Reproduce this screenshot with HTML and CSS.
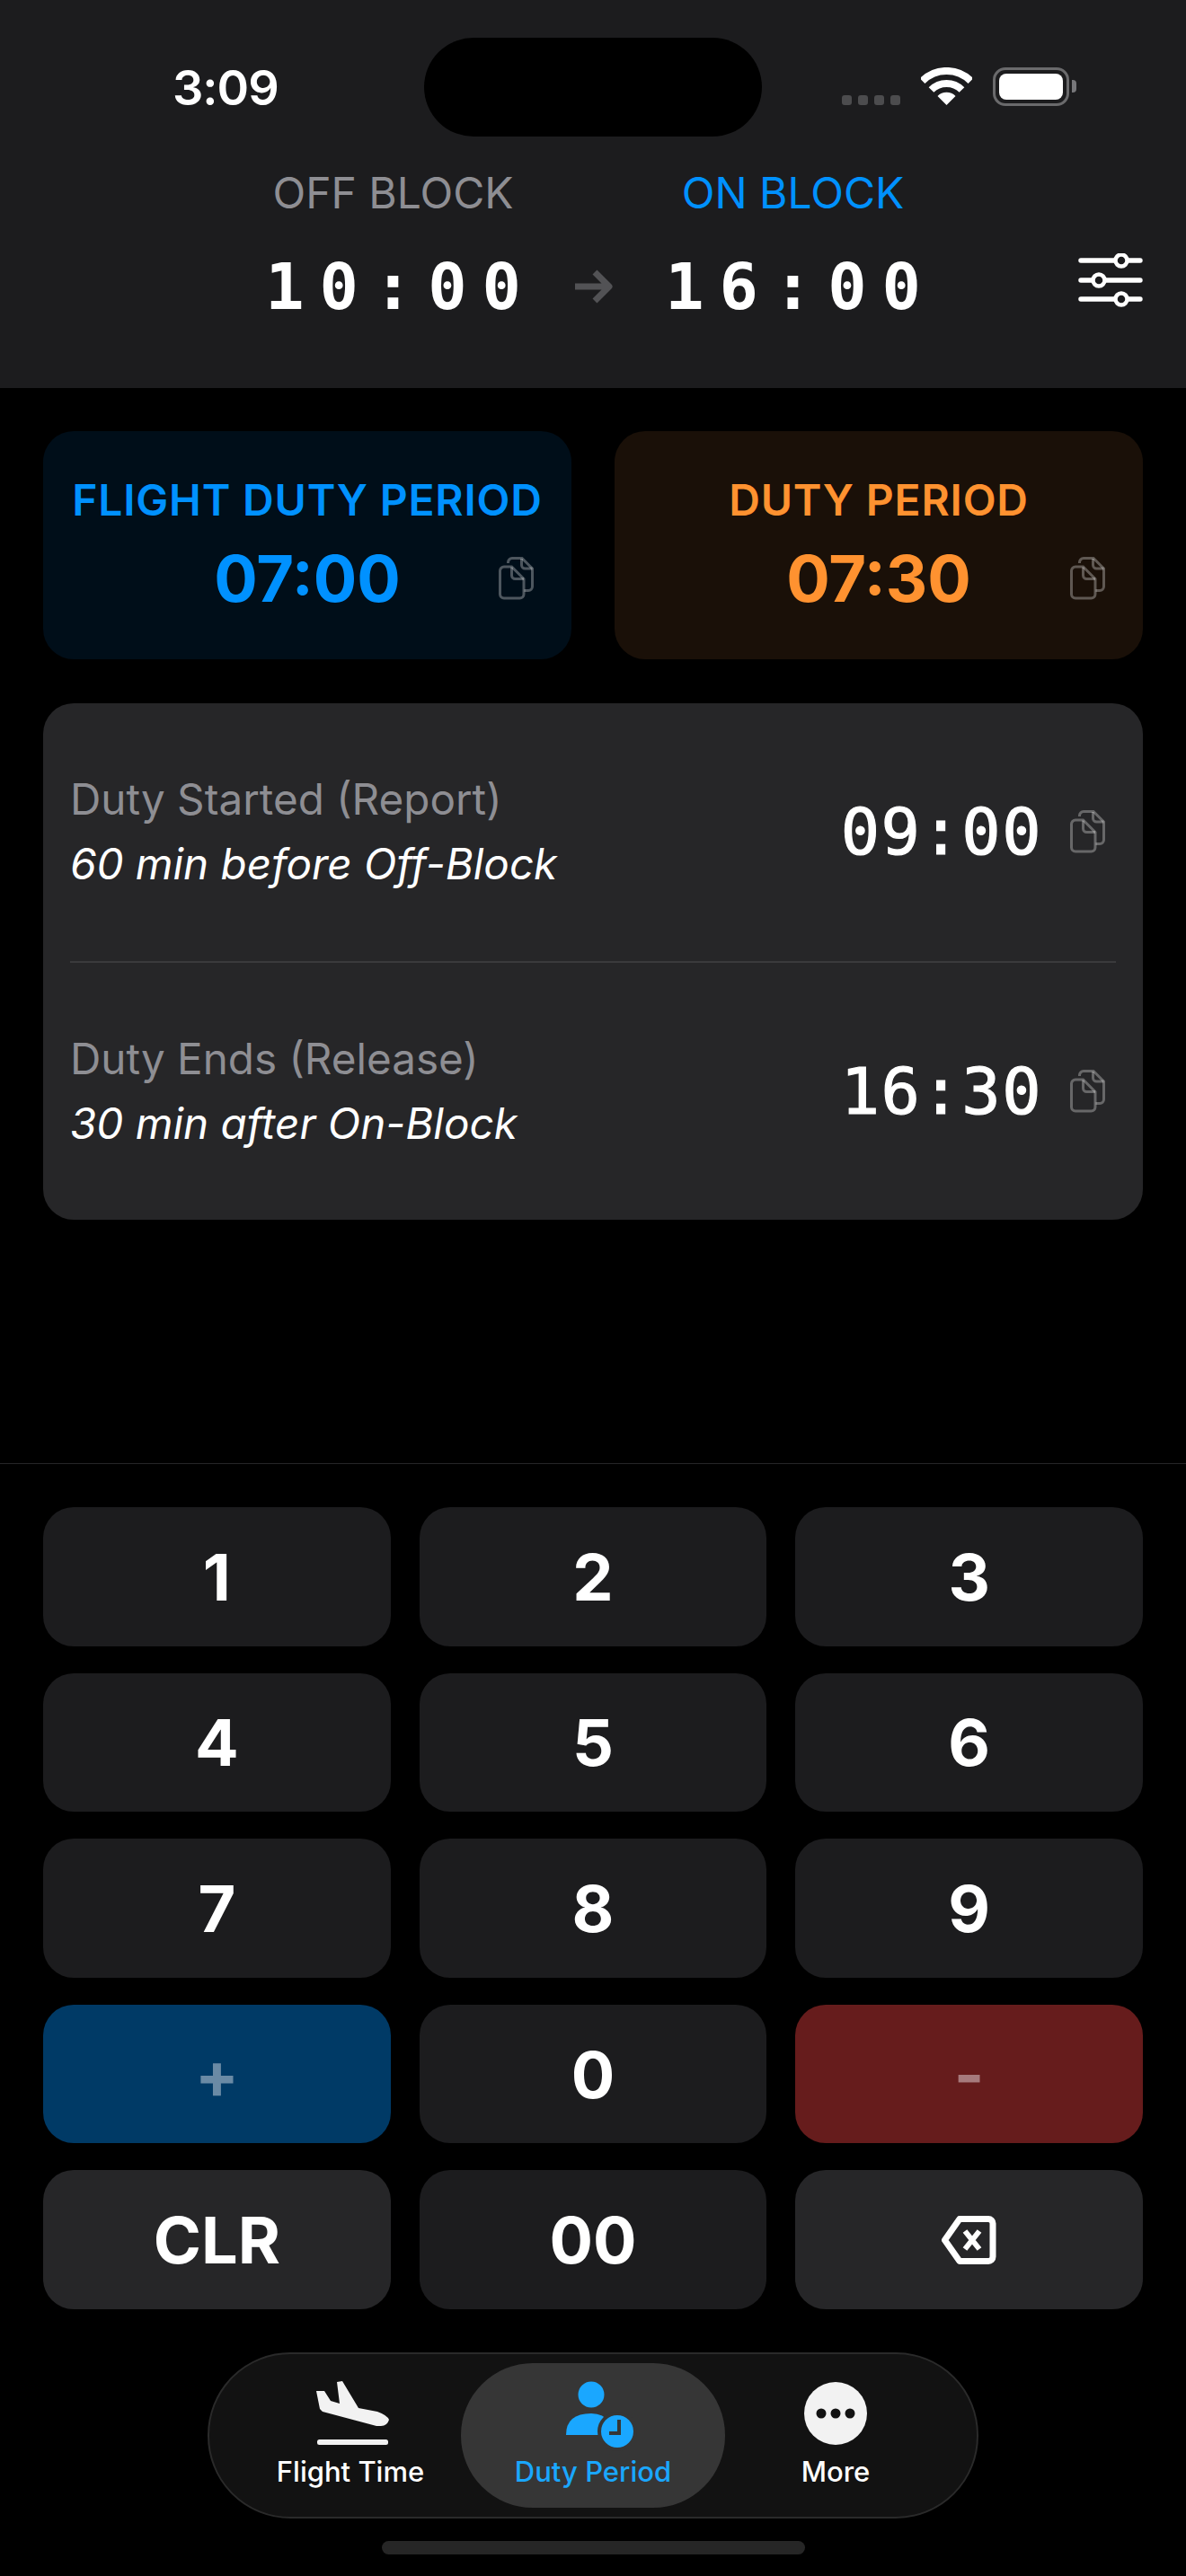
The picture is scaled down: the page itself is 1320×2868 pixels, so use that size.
FILE: index.html
```html
<!DOCTYPE html>
<html lang="en">
<head>
<meta charset="UTF-8" />
<meta name="viewport" content="width=device-width, initial-scale=1" />
<title>Duty Period</title>
<link rel="stylesheet" href="styles.css">
</head>
<body>

<svg class="defs" aria-hidden="true">
  <symbol id="copy" viewBox="0 0 39 48">
    <path d="M10.500 7V6a4.500 4.500 0 0 1 4.500-4.500h11L37.500 13v20a4.500 4.500 0 0 1-4.500 4.500h-4.500" fill="none" stroke="currentColor" stroke-width="3"/>
    <path d="M25.500 2v7a4 4 0 0 0 4 4h8" fill="none" stroke="currentColor" stroke-width="3"/>
    <path d="M6 11h8.500L28 24.500V41.500a4.500 4.500 0 0 1-4.500 4.500H6a4.500 4.500 0 0 1-4.500-4.500v-26A4.500 4.500 0 0 1 6 11z" fill="none" stroke="currentColor" stroke-width="3"/>
    <path d="M14.500 11.500v9a4 4 0 0 0 4 4H28" fill="none" stroke="currentColor" stroke-width="3"/>
  </symbol>
</svg>

<div class="page">
  <header class="top">
    <div class="status">
      <div class="clock">3:09</div>
      <div class="island"></div>
      <div class="status-icons">
        <div class="signal"><i></i><i></i><i></i><i></i></div>
        <svg class="wifi" viewBox="0 0 57 42">
          <path d="M1.600 15.100a38 38 0 0 1 53.800 0" fill="none" stroke="#fff" stroke-width="8"/>
          <path d="M11.500 25a24 24 0 0 1 34 0" fill="none" stroke="#fff" stroke-width="8"/>
          <path d="M28.500 42L18.500 32a14 14 0 0 1 20 0z" fill="#fff"/>
        </svg>
        <div class="battery"><div class="battery-fill"></div></div>
        <div class="battery-cap"></div>
      </div>
    </div>

    <div class="block-row">
      <div></div>
      <div class="block-grid">
        <div class="block-label">OFF BLOCK</div>
        <div></div>
        <div class="block-label on">ON BLOCK</div>
        <div class="block-time">10:00</div>
        <svg class="arrow" viewBox="0 0 46 38">
          <path d="M3 19h38M25 3l16 16-16 16" fill="none" stroke="#525255" stroke-width="7" stroke-linejoin="round"/>
        </svg>
        <div class="block-time">16:00</div>
      </div>
      <svg class="sliders" viewBox="0 0 72 60">
        <path d="M3 8h66M3 30h66M3 51h66" stroke="#fff" stroke-width="5.500" stroke-linecap="round"/>
        <circle cx="48" cy="8" r="6.500" fill="#1c1c1e" stroke="#fff" stroke-width="4.500"/>
        <circle cx="23" cy="30" r="6.500" fill="#1c1c1e" stroke="#fff" stroke-width="4.500"/>
        <circle cx="48" cy="51" r="6.500" fill="#1c1c1e" stroke="#fff" stroke-width="4.500"/>
      </svg>
    </div>
  </header>

  <main class="main">
    <div class="cards">
      <div class="card fdp">
        <div class="card-title">FLIGHT DUTY PERIOD</div>
        <div class="card-value">07:00</div>
        <svg class="copy card-copy"><use href="#copy"/></svg>
      </div>
      <div class="card dp">
        <div class="card-title">DUTY PERIOD</div>
        <div class="card-value">07:30</div>
        <svg class="copy card-copy"><use href="#copy"/></svg>
      </div>
    </div>

    <div class="panel">
      <div class="panel-row">
        <div class="panel-text">
          <div class="panel-label">Duty Started (Report)</div>
          <div class="panel-note">60 min before Off-Block</div>
        </div>
        <div class="panel-time">09:00</div>
        <svg class="copy"><use href="#copy"/></svg>
      </div>
      <div class="panel-row">
        <div class="panel-text">
          <div class="panel-label">Duty Ends (Release)</div>
          <div class="panel-note">30 min after On-Block</div>
        </div>
        <div class="panel-time">16:30</div>
        <svg class="copy"><use href="#copy"/></svg>
      </div>
    </div>
  </main>

  <section class="keypad">
    <div class="keys">
      <div class="key">1</div>
      <div class="key">2</div>
      <div class="key">3</div>
      <div class="key">4</div>
      <div class="key">5</div>
      <div class="key">6</div>
      <div class="key">7</div>
      <div class="key">8</div>
      <div class="key">9</div>
      <div class="key plus">+</div>
      <div class="key">0</div>
      <div class="key minus">-</div>
      <div class="key light">CLR</div>
      <div class="key">00</div>
      <div class="key light">
        <svg class="backspace" viewBox="0 0 61 54">
          <path d="M20 3.500H52a5 5 0 0 1 5 5V45.500a5 5 0 0 1-5 5H20L3.500 27z" fill="none" stroke="#fff" stroke-width="7" stroke-linejoin="round"/>
          <path d="M26 17l16 20M42 17L26 37" fill="none" stroke="#fff" stroke-width="6"/>
        </svg>
      </div>
    </div>

    <nav class="tabs">
      <div class="tab">
        <svg class="tab-icon" viewBox="-3 0 84 72">
          <path d="M1 11L10 11L17 22L27 25L24 1L30 0L48 30L69 34Q80 38 82 43Q80 50 73 50L68 50L8 34L5 31z" fill="#f2f2f2"/>
          <rect x="2" y="65" width="79" height="6" rx="2.500" fill="#f2f2f2"/>
        </svg>
        <div class="tab-label">Flight Time</div>
      </div>
      <div class="tab active">
        <svg class="tab-icon" viewBox="-10 0 84 72">
          <circle cx="30" cy="15" r="14.500" fill="#1aa7ff"/>
          <path d="M2 60Q2 36 30 36Q44 36 50 46V60z" fill="#1aa7ff"/>
          <circle cx="59" cy="56" r="22" fill="#363636"/>
          <circle cx="59" cy="56" r="18" fill="#1aa7ff"/>
          <path d="M61 43v15H50" fill="none" stroke="#363636" stroke-width="4"/>
        </svg>
        <div class="tab-label">Duty Period</div>
      </div>
      <div class="tab">
        <svg class="tab-icon" viewBox="0 0 84 72">
          <circle cx="42" cy="36" r="35" fill="#f2f2f2"/>
          <circle cx="26" cy="36" r="5.500" fill="#121212"/>
          <circle cx="42" cy="36" r="5.500" fill="#121212"/>
          <circle cx="58" cy="36" r="5.500" fill="#121212"/>
        </svg>
        <div class="tab-label">More</div>
      </div>
    </nav>

    <div class="home-bar"></div>
  </section>
</div>

</body>
</html>
```

FILE: styles.css
```css
/* Phone sized page, everything stacks top to bottom */
body {
  margin: 0;
  background: #000;
  color: #fff;
  font-family: Inter, 'Noto Sans', sans-serif;
}

.defs {
  display: none;
}

.page {
  width: 1320px;
  height: 2868px;
  display: flex;
  flex-direction: column;
  overflow: hidden;
}

/* Header */
.top {
  height: 432px;
  box-sizing: border-box;
  background: #1c1c1e;
  padding-top: 42px;
}

.status {
  display: grid;
  grid-template-columns: 472px 376px 472px;
  align-items: center;
}

.clock {
  padding-left: 192px;
  font-size: 54px;
  font-weight: 600;
  letter-spacing: -1px;
}

.island {
  height: 110px;
  background: #000;
  border-radius: 55px;
}

.status-icons {
  display: flex;
  align-items: center;
  padding-left: 89px;
}

.signal {
  display: flex;
  gap: 7px;
  align-self: flex-end;
  margin-bottom: 1px;
}

.signal i {
  width: 11px;
  height: 11px;
  border-radius: 3px;
  background: #4c4c4e;
}

.wifi {
  width: 57px;
  height: 42px;
  margin-left: 23px;
  margin-top: -2px;
}

.battery {
  width: 85px;
  height: 43px;
  box-sizing: border-box;
  margin-left: 23px;
  margin-top: -2px;
  padding: 4px;
  border: 3px solid #6a6a6c;
  border-radius: 14px;
}

.battery-fill {
  height: 100%;
  background: #fff;
  border-radius: 8px;
}

.battery-cap {
  width: 5px;
  height: 14px;
  margin-left: 3px;
  margin-top: -2px;
  background: #77777a;
  border-radius: 0 4px 4px 0;
}

.block-row {
  display: grid;
  grid-template-columns: 1fr auto 1fr;
  align-items: end;
  margin-top: 38px;
}

.block-grid {
  display: grid;
  grid-template-columns: 300px 145px 300px;
  justify-items: center;
  align-items: center;
  row-gap: 40px;
}

.block-label {
  font-size: 48px;
  line-height: 50px;
  color: #8e8e93;
}

.block-label.on {
  color: #0091ff;
}

.block-time {
  font-family: 'DejaVu Sans Mono', monospace;
  font-size: 72px;
  font-weight: 700;
  line-height: 78px;
  letter-spacing: 17px;
  margin-right: -17px;
}

.arrow {
  width: 46px;
  height: 38px;
}

.sliders {
  width: 72px;
  height: 60px;
  justify-self: end;
  margin-right: 48px;
  margin-bottom: 16px;
}

/* Results */
.main {
  flex: 1;
  box-sizing: border-box;
  padding: 48px 48px 0;
  border-bottom: 1px solid #262628;
}

.cards {
  display: grid;
  grid-template-columns: 1fr 1fr;
  gap: 48px;
}

.card {
  position: relative;
  height: 254px;
  box-sizing: border-box;
  padding-top: 3px;
  border-radius: 34px;
  display: flex;
  flex-direction: column;
  align-items: center;
  justify-content: center;
  gap: 19px;
}

.fdp {
  background: #000e19;
  color: #0091ff;
}

.dp {
  background: #1a1008;
  color: #ff9230;
}

.card-title {
  font-size: 48px;
  font-weight: 600;
  line-height: 52px;
  letter-spacing: 0.8px;
}

.card-value {
  font-size: 72px;
  font-weight: 700;
  line-height: 84px;
}

.copy {
  width: 39px;
  height: 48px;
  flex: none;
  color: rgba(255, 255, 255, 0.3);
}

.card-copy {
  position: absolute;
  right: 42px;
  top: 140px;
}

.panel {
  margin-top: 49px;
  height: 575px;
  background: #262628;
  border-radius: 34px;
  display: flex;
  flex-direction: column;
}

.panel-row {
  flex: 1;
  margin: 0 30px;
  padding-right: 12px;
  display: flex;
  align-items: center;
}

.panel-row + .panel-row {
  border-top: 2px solid #3a3a3c;
}

.panel-text {
  flex: 1;
}

.panel-label {
  font-size: 47.600px;
  line-height: 56px;
  color: #8e8e93;
}

.panel-note {
  margin-top: 16px;
  font-size: 47.600px;
  font-style: italic;
  line-height: 56px;
}

/* no medium weight in this font, regular plus a thin stroke gets close */
.panel-time {
  margin-right: 31px;
  font-family: 'DejaVu Sans Mono', monospace;
  font-size: 72px;
  letter-spacing: 1.500px;
  -webkit-text-stroke: 1.200px #fff;
}

/* Keypad and tab bar */
.keypad {
  padding: 48px 48px 24px;
}

.keys {
  display: grid;
  grid-template-columns: repeat(3, 1fr);
  grid-auto-rows: 154.6px;
  gap: 30px 32px;
}

.key {
  display: flex;
  align-items: center;
  justify-content: center;
  background: #1c1c1e;
  border-radius: 34px;
  font-size: 72px;
  font-weight: 700;
}

.key.light {
  background: #262628;
}

.key.plus {
  background: #003a66;
  color: #6a8aa5;
}

.key.minus {
  background: #661c1c;
  color: #a67a7c;
}

.backspace {
  width: 61px;
  height: 54px;
}

.tabs {
  width: 858px;
  height: 185px;
  box-sizing: border-box;
  margin: 48px auto 0;
  padding: 10px 34px;
  display: grid;
  grid-template-columns: 246px 294px 246px;
  background: #121212;
  border: 2px solid #2a2a2a;
  border-radius: 92px;
}

.tab {
  display: flex;
  flex-direction: column;
  align-items: center;
  justify-content: center;
  gap: 9px;
}

.tab.active {
  background: #363636;
  border-radius: 80px;
  color: #1aa7ff;
}

.tab-icon {
  width: 84px;
  height: 72px;
  overflow: visible;
}

.tab-label {
  font-size: 31px;
  font-weight: 500;
  line-height: 40px;
}

.home-bar {
  width: 471px;
  height: 15px;
  margin: 25px auto 0;
  background: #262626;
  border-radius: 8px;
}
```
